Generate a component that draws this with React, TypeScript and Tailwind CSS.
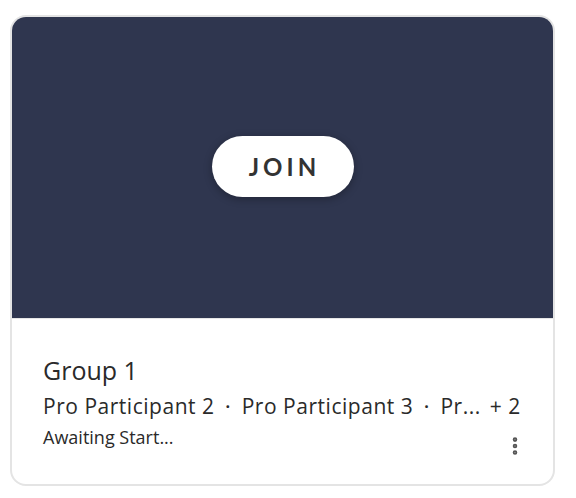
import { MoreVertical } from 'lucide-react'

export default function App() {
  const participants = ['Pro Participant 2', 'Pro Participant 3', 'Pro Participant 4']

  return (
    <div className="w-[576px] h-[498px] bg-white pl-[10px] pt-[15px]" style={{ fontFamily: '"Open Sans", sans-serif' }}>
      <div className="w-[545px] h-[471px] rounded-[16px] border-2 border-[#e4e4e4] overflow-hidden flex flex-col">
        <div className="h-[302px] bg-[#2f364f] border-b border-[#e6e6e6] flex items-center justify-center">
          <button className="w-[142px] h-[61px] -mt-[2px] rounded-full bg-white shadow-[0_2px_8px_rgba(0,0,0,0.3)] text-[24px] font-bold tracking-[0.17em] text-[#333] pl-[4px] font-['Lato',sans-serif]">
            JOIN
          </button>
        </div>
        <div className="flex-1 pl-[31px] pr-[30px] pt-[36px] relative text-[#2a2a2a]">
          <h3 className="text-[25px] leading-[30px]">Group 1</h3>
          <div className="mt-[8px] flex items-center text-[21px] leading-[26px] tracking-[0.025em] whitespace-nowrap">
            <span>{participants[0]}</span>
            <span className="mx-[11px] text-[16px] font-bold">·</span>
            <span>{participants[1]}</span>
            <span className="mx-[11px] text-[16px] font-bold">·</span>
            <span>Pr...</span>
            <span className="ml-[9px]">+ 2</span>
          </div>
          <div className="mt-[7px] text-[18px] leading-[22px]">Awaiting Start...</div>
          <MoreVertical className="absolute right-[27px] bottom-[27px] text-[#555]" size={22} strokeWidth={3} />
        </div>
      </div>
    </div>
  )
}
